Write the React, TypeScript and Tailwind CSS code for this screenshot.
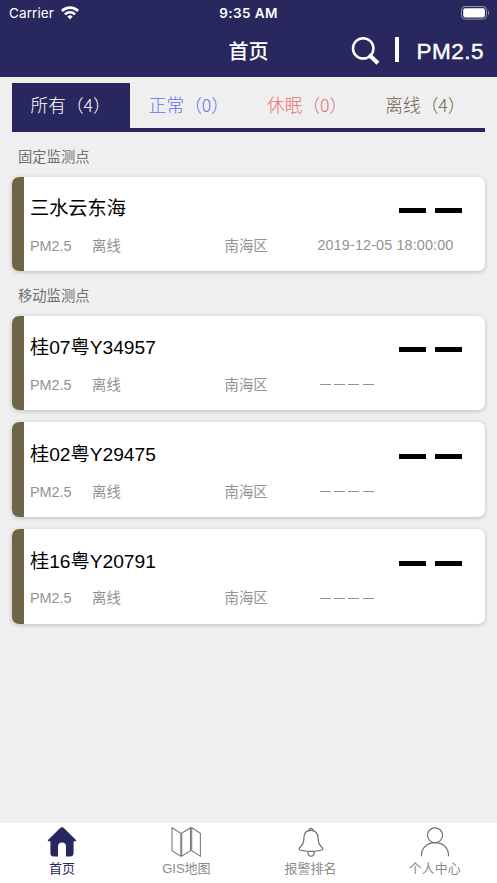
import type { ReactNode } from "react";

interface Station {
  name: string;
  metric: string;
  status: string;
  district: string;
  time?: string;
}

const fixedStations: Station[] = [
  {
    name: "三水云东海",
    metric: "PM2.5",
    status: "离线",
    district: "南海区",
    time: "2019-12-05 18:00:00",
  },
];

const mobileStations: Station[] = [
  { name: "桂07粤Y34957", metric: "PM2.5", status: "离线", district: "南海区" },
  { name: "桂02粤Y29475", metric: "PM2.5", status: "离线", district: "南海区" },
  { name: "桂16粤Y20791", metric: "PM2.5", status: "离线", district: "南海区" },
];

const filters = [
  { label: "所有（4）", className: "bg-[#28285f] text-white" },
  { label: "正常（0）", className: "text-[#6b6bf5]" },
  { label: "休眠（0）", className: "text-[#e87070]" },
  { label: "离线（4）", className: "text-[#6e6548]" },
];

function WifiIcon() {
  return (
    <svg width="18" height="14" viewBox="0 0 18 14" fill="none" stroke="white" strokeWidth="2.6">
      <path d="M0.9 5a11.5 11.5 0 0 1 16.2 0" />
      <path d="M4 8.3a7.1 7.1 0 0 1 10 0" />
      <path d="M9 13.4l-2.6-2.8a3.7 3.7 0 0 1 5.2 0z" fill="white" stroke="none" />
    </svg>
  );
}

function BatteryIcon() {
  return (
    <svg width="29" height="14" viewBox="0 0 29 14">
      <rect x="0.5" y="0.5" width="25" height="12.6" rx="3.4" fill="none" stroke="#9393af" />
      <rect x="2.2" y="2.2" width="21.7" height="9.2" rx="1.8" fill="white" />
      <path d="M27 4.6c1.6 0.7 1.6 3.7 0 4.4z" fill="#9393af" />
    </svg>
  );
}

function SearchIcon() {
  return (
    <svg width="30" height="30" viewBox="0 0 30 30" fill="none" stroke="white">
      <circle cx="12.2" cy="11.4" r="10.2" strokeWidth="2.5" />
      <path d="M18.2 17.4l2.3 2.3" strokeWidth="2.4" />
      <path d="M19.4 19l7.6 7.2" strokeWidth="4.2" />
    </svg>
  );
}

function HomeIcon() {
  return (
    <svg width="30" height="30" viewBox="0 0 30 30" fill="#28285f">
      <path d="M15 0.3c.8 0 1.5.3 2.1.9L29 13c.5.5.2 1.2-.5 1.2H26.6V26c0 2.2-1.1 3.4-3.2 3.4h-4.4V19.4c0-2.4-1.500-4-4-4s-4 1.600-4 4v10H6.6c-2.1 0-3.200-1.200-3.200-3.400V14.2H1.5c-.7 0-1-.7-.5-1.2L12.9 1.2c.6-.6 1.3-.9 2.1-.9z" />
    </svg>
  );
}

function MapIcon() {
  return (
    <svg width="30" height="30" viewBox="0 0 30 30" fill="none" stroke="#7b7b7b" strokeWidth="1.1">
      <path d="M1 0.7l8.8 5.6v22.8L1 23.6z" />
      <path d="M10.7 6.3l8.8-5.6v22.9l-8.8 5.5z" />
      <path d="M20.700 0.7l8.700 5.6v22.8l-8.700-5.500z" />
    </svg>
  );
}

function BellIcon() {
  return (
    <svg width="30" height="30" viewBox="0 0 30 30" fill="none" stroke="#6d6d6d" strokeWidth="1.2">
      <path d="M12.700 3.700a2.300 2.300 0 1 1 4.600 0" />
      <path d="M15 3.400c-4.400 0-7.100 3-7.100 7.700 0 4.400-.5 6.600-4 9.400-.9.8-1 2.100.1 2.500 3 1 6.800 1.300 11 1.300s8-.3 11-1.300c1.100-.4 1-1.700.1-2.500-3.500-2.800-4-5-4-9.400C22.100 6.400 19.400 3.400 15 3.400z" />
      <path d="M11.800 24.400c0 3 1.100 4.800 3.200 4.800s3.200-1.800 3.200-4.800" />
    </svg>
  );
}

function UserIcon() {
  return (
    <svg width="30" height="30" viewBox="0 0 30 30" fill="none" stroke="#6d6d6d" strokeWidth="1.2">
      <circle cx="15" cy="8.3" r="7.5" />
      <path d="M1.4 29.2c0-8.200 5.200-13.600 13.600-13.600s13.600 5.400 13.600 13.600" />
    </svg>
  );
}

function StationCard({ station }: { station: Station }) {
  return (
    <div className="flex h-[94.7px] overflow-hidden rounded-[7px] bg-white shadow-[0_1px_4px_rgba(0,0,0,0.22)]">
      <div className="w-3 shrink-0 bg-[#6e6548]" />
      <div className="flex-1 pl-1.5">
        <div className="flex h-[64px] items-center justify-between pr-[23px]">
          <h2 className="pt-0.5 text-[19.2px] text-black">{station.name}</h2>
          <div className="mt-1 flex gap-[9px]">
            <div className="h-[5px] w-[27px] bg-black" />
            <div className="h-[5px] w-[27px] bg-black" />
          </div>
        </div>
        <div className="flex h-3 items-center text-[14.4px] text-[#929295]">
          <span className="w-[62px]">{station.metric}</span>
          <span className="w-[132.5px]">{station.status}</span>
          <span className="w-[93px]">{station.district}</span>
          {station.time ? (
            <span className="-mt-0.5 whitespace-nowrap tracking-[0.12px]">{station.time}</span>
          ) : (
            <div className="-mt-0.5 ml-0.5 flex gap-[3.4px]">
              {[0, 1, 2, 3].map((i) => (
                <div key={i} className="h-px w-[11px] bg-[#929295]" />
              ))}
            </div>
          )}
        </div>
      </div>
    </div>
  );
}

function SectionTitle({ children }: { children: ReactNode }) {
  return (
    <h3 className="flex h-[44.5px] items-center pt-[7px] pl-1.5 text-[14.3px] text-[#707073]">
      {children}
    </h3>
  );
}

function NavItem({ icon, label, active }: { icon: ReactNode; label: string; active?: boolean }) {
  return (
    <div
      className={`flex flex-1 flex-col items-center pt-1 ${active ? "text-[#28285f]" : "text-[#8b8b8b]"}`}
    >
      {icon}
      <span className="mt-0.5 text-[13px] leading-5">{label}</span>
    </div>
  );
}

export default function App() {
  return (
    <div className="flex h-screen flex-col bg-[#efefef] font-['Liberation_Sans','Noto_Sans_CJK_SC',sans-serif]">
      <header className="h-[77px] shrink-0 bg-[#28285f] text-white">
        <div className="grid h-[26px] grid-cols-3 items-center pr-[7px] pl-[9px] font-['Inter',sans-serif] text-[13.5px]">
          <div className="flex items-center gap-[7px]">
            <span className="tracking-[0.1px]">Carrier</span>
            <WifiIcon />
          </div>
          <span className="pr-0.5 text-center font-semibold tracking-[0.4px]">9:35 AM</span>
          <div className="flex justify-end">
            <BatteryIcon />
          </div>
        </div>
        <div className="grid h-[51px] grid-cols-[1fr_auto_1fr] items-center pr-[13px] pl-[13px]">
          <div />
          <h1 className="text-[20px] font-medium">首页</h1>
          <div className="flex items-center justify-end">
            <SearchIcon />
            <div className="-mt-1 ml-[14px] h-[25px] w-[4px] bg-white" />
            <span className="ml-[17px] text-[22.5px] tracking-[0.5px] [-webkit-text-stroke:0.4px_white]">
              PM2.5
            </span>
          </div>
        </div>
      </header>

      <main className="flex-1 px-3 pt-1.5">
        <div className="flex h-[49px] border-b-4 border-[#28285f] font-['Noto_Sans_CJK_SC',sans-serif] text-[17.7px] font-light">
          {filters.map((filter) => (
            <div
              key={filter.label}
              className={`flex flex-1 items-center justify-center pr-px pb-0.5 whitespace-nowrap ${filter.className}`}
            >
              {filter.label}
            </div>
          ))}
        </div>

        <SectionTitle>固定监测点</SectionTitle>
        {fixedStations.map((station) => (
          <StationCard key={station.name} station={station} />
        ))}

        <SectionTitle>移动监测点</SectionTitle>
        <div className="flex flex-col gap-3">
          {mobileStations.map((station) => (
            <StationCard key={station.name} station={station} />
          ))}
        </div>
      </main>

      <nav className="flex h-[60px] shrink-0 bg-white">
        <NavItem icon={<HomeIcon />} label="首页" active />
        <NavItem icon={<MapIcon />} label="GIS地图" />
        <NavItem icon={<BellIcon />} label="报警排名" />
        <NavItem icon={<UserIcon />} label="个人中心" />
      </nav>
    </div>
  );
}
